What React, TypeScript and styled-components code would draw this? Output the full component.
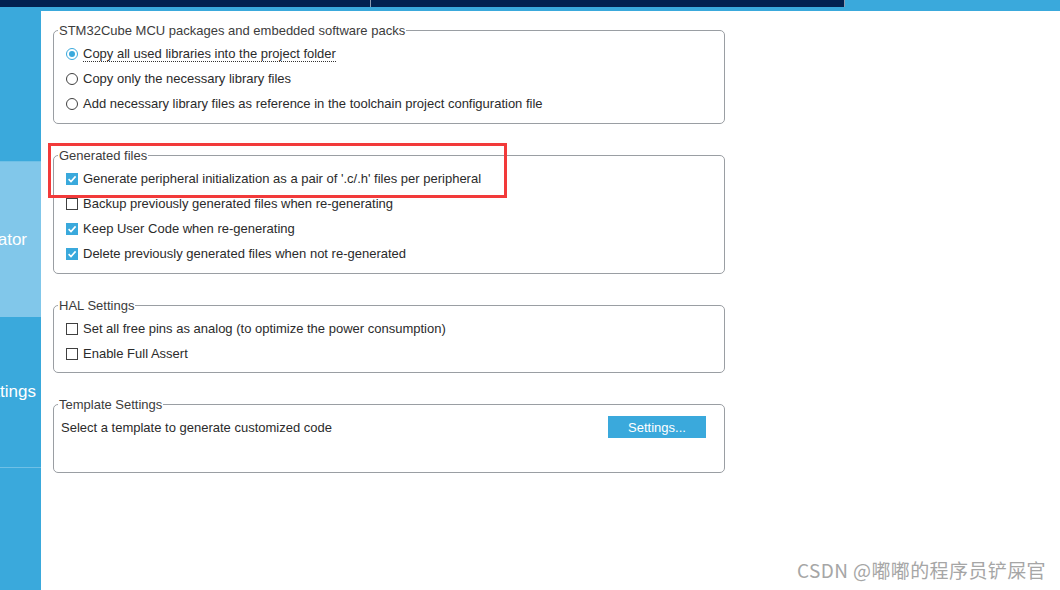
import React from "react";
import styled, { createGlobalStyle } from "styled-components";

const GlobalStyle = createGlobalStyle`
  html, body {
    margin: 0;
    padding: 0;
    background: #ffffff;
    overflow: hidden;
  }
  body {
    font-family: "Liberation Sans", Arial, sans-serif;
  }
`;

type option = {
  label: string;
  checked: boolean;
  focused?: boolean;
};

const packOptions: option[] = [
  { label: "Copy all used libraries into the project folder", checked: true, focused: true },
  { label: "Copy only the necessary library files", checked: false },
  {
    label: "Add necessary library files as reference in the toolchain project configuration file",
    checked: false,
  },
];

const generatedOptions: option[] = [
  { label: "Generate peripheral initialization as a pair of '.c/.h' files per peripheral", checked: true },
  { label: "Backup previously generated files when re-generating", checked: false },
  { label: "Keep User Code when re-generating", checked: true },
  { label: "Delete previously generated files when not re-generated", checked: true },
];

const halOptions: option[] = [
  { label: "Set all free pins as analog (to optimize the power consumption)", checked: false },
  { label: "Enable Full Assert", checked: false },
];

const Check: React.FC<{ checked: boolean }> = ({ checked }) => (
  <CheckBox checked={checked}>
    {checked ? (
      <svg width="10" height="10" viewBox="0 0 10 10">
        <path d="M1.6 5.2 L4 7.5 L8.6 2.4" fill="none" stroke="#ffffff" strokeWidth="1.6" />
      </svg>
    ) : null}
  </CheckBox>
);

const App: React.FC = () => {
  return (
    <Page>
      <GlobalStyle />
      <TopBar>
        <Tab width="371px" />
        <Tab width="474px" />
        <Tab active />
      </TopBar>
      <Strip />
      <Body>
        <Sidebar>
          <SideItem height="151px" line />
          <SideItem height="155px" active>
            <SideText pad="14px">Code Generator</SideText>
          </SideItem>
          <SideItem height="151px" line>
            <SideText pad="5px">Advanced Settings</SideText>
          </SideItem>
          <SideItem height="200px" />
        </Sidebar>
        <Content>
          <Group>
            <Legend>STM32Cube MCU packages and embedded software packs</Legend>
            {packOptions.map((o) => (
              <Row key={o.label}>
                <Radio checked={o.checked} />
                <Label focused={o.focused}>{o.label}</Label>
              </Row>
            ))}
          </Group>
          <Group>
            <Legend>Generated files</Legend>
            {generatedOptions.map((o) => (
              <Row key={o.label}>
                <Check checked={o.checked} />
                <Label>{o.label}</Label>
              </Row>
            ))}
          </Group>
          <Group bottom="6px">
            <Legend>HAL Settings</Legend>
            {halOptions.map((o) => (
              <Row key={o.label}>
                <Check checked={o.checked} />
                <Label>{o.label}</Label>
              </Row>
            ))}
          </Group>
          <Group bottom="34px">
            <Legend>Template Settings</Legend>
            <TemplateRow>
              <Label>Select a template to generate customized code</Label>
              <Button>Settings...</Button>
            </TemplateRow>
          </Group>
        </Content>
      </Body>
      <Highlight />
      <Watermark>CSDN @嘟嘟的程序员铲屎官</Watermark>
    </Page>
  );
};

export default App;

const Page = styled.div`
  position: relative;
  width: 1060px;
  height: 590px;
  overflow: hidden;
  display: flex;
  flex-direction: column;
`;

const TopBar = styled.div`
  display: flex;
  height: 7px;
  background: #022150;
`;

const Tab = styled.div<{ width?: string; active?: boolean }>`
  width: ${({ width }) => width || "auto"};
  flex: ${({ width }) => (width ? "none" : "1")};
  border-right: 1px solid rgba(255, 255, 255, 0.55);
  background: ${({ active }) => (active ? "#3aa9dc" : "#022150")};
  box-sizing: border-box;
  &:last-child {
    border-right: 0;
  }
`;

const Strip = styled.div`
  height: 4px;
  background: #3aa9dc;
`;

const Body = styled.div`
  display: flex;
  flex: 1;
  min-height: 0;
`;

const Sidebar = styled.div`
  width: 41px;
  flex: none;
  background: #3aa9dc;
  overflow: hidden;
  display: flex;
  flex-direction: column;
`;

const SideItem = styled.div<{ height: string; active?: boolean; line?: boolean }>`
  height: ${({ height }) => height};
  flex: none;
  box-sizing: border-box;
  display: flex;
  align-items: center;
  justify-content: flex-end;
  background: ${({ active }) => (active ? "#81c7ea" : "#3aa9dc")};
  border-bottom: ${({ line }) => (line ? "1px solid #6fc0e6" : "0")};
`;

const SideText = styled.span<{ pad: string }>`
  color: #ffffff;
  font-size: 17px;
  white-space: nowrap;
  padding-right: ${({ pad }) => pad};
`;

const Content = styled.div`
  flex: 1;
  padding: 12px 0 0 12px;
  display: flex;
  flex-direction: column;
  gap: 24px;
`;

const Group = styled.fieldset<{ bottom?: string }>`
  width: 672px;
  box-sizing: border-box;
  margin: 0;
  padding: 3px 0 ${({ bottom }) => bottom || "7px"} 0;
  border: 1px solid #9a9ea3;
  border-radius: 5px;
  min-width: 0;
`;

const Legend = styled.legend`
  margin-left: 4px;
  padding: 0 1px;
  font-size: 13px;
  line-height: 15px;
  color: #3c3c3c;
`;

const Row = styled.div`
  display: flex;
  align-items: center;
  height: 25px;
  padding-left: 12px;
  gap: 5px;
`;

const Label = styled.span<{ focused?: boolean }>`
  font-size: 13px;
  line-height: 15px;
  color: #2b2b2b;
  white-space: nowrap;
  border-bottom: 1px dotted ${({ focused }) => (focused ? "#333333" : "transparent")};
  padding-top: 1px;
`;

const Radio = styled.div<{ checked: boolean }>`
  width: 12px;
  height: 12px;
  box-sizing: border-box;
  border-radius: 50%;
  border: 1px solid ${({ checked }) => (checked ? "#3aa9dc" : "#404040")};
  display: flex;
  align-items: center;
  justify-content: center;
  flex: none;
  &::after {
    content: "";
    width: 6px;
    height: 6px;
    border-radius: 50%;
    background: ${({ checked }) => (checked ? "#3aa9dc" : "transparent")};
  }
`;

const CheckBox = styled.div<{ checked: boolean }>`
  width: 12px;
  height: 12px;
  box-sizing: border-box;
  flex: none;
  display: flex;
  align-items: center;
  justify-content: center;
  background: ${({ checked }) => (checked ? "#3aa9dc" : "#ffffff")};
  border: 1px solid ${({ checked }) => (checked ? "#3aa9dc" : "#404040")};
`;

const TemplateRow = styled.div`
  display: flex;
  align-items: center;
  justify-content: space-between;
  padding: 1px 18px 0 7px;
`;

const Button = styled.div`
  width: 98px;
  height: 22px;
  background: #3aa9dc;
  color: #ffffff;
  font-size: 13px;
  display: flex;
  align-items: center;
  justify-content: center;
`;

const Highlight = styled.div`
  position: absolute;
  left: 48px;
  top: 143px;
  width: 459px;
  height: 55px;
  box-sizing: border-box;
  border: 3px solid #f23a3a;
  pointer-events: none;
`;

const Watermark = styled.div`
  position: absolute;
  right: 14px;
  bottom: 7px;
  font-family: "Noto Sans CJK SC", "Noto Sans", sans-serif;
  font-size: 19px;
  color: #a6a6a6;
  letter-spacing: 0.4px;
`;
